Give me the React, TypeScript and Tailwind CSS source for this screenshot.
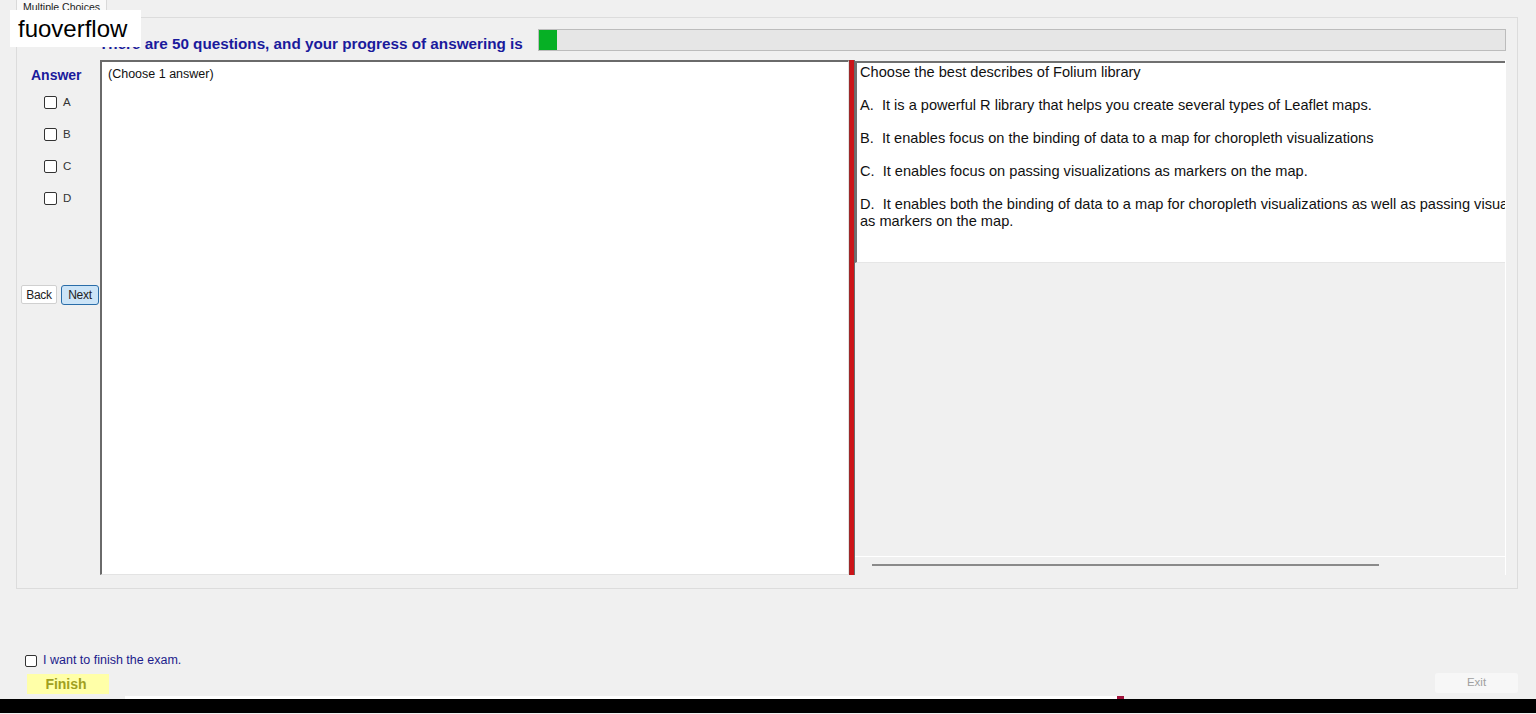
function Box({ size = 13 }: { size?: number }) {
  return (
    <span
      className="inline-block shrink-0 rounded-[2px] border border-[#333] bg-white"
      style={{ width: size, height: size }}
    />
  );
}

const options = [
  "A.  It is a powerful R library that helps you create several types of Leaflet maps.",
  "B.  It enables focus on the binding of data to a map for choropleth visualizations",
  "C.  It enables focus on passing visualizations as markers on the map.",
];

export default function App() {
  return (
    <div className="relative flex h-[714px] w-[1536px] flex-col overflow-hidden bg-[#f0f0f0] text-black [font-family:'Liberation_Sans',Arial,sans-serif]">
      {/* tab header */}
      <div className="flex h-[17px] pl-[16px]">
        <div className="flex h-[17px] w-[91px] items-center justify-center border-x border-[#d9d9d9] bg-[#f9f9f9] pb-[3px] text-[10.5px] leading-none text-[#222]">
          Multiple Choices
        </div>
      </div>

      {/* tab page */}
      <div className="ml-[16px] mr-[18px] flex h-[572px] flex-col border border-[#dcdcdc] pt-[11px]">
        {/* progress header */}
        <div className="flex h-[22px] items-center pr-[11px]">
          <div className="w-[521px] whitespace-nowrap pl-[82px] pt-[7px] text-[15.25px] font-bold leading-none text-[#1a1a9c]">
            There are 50 questions, and your progress of answering is
          </div>
          <div className="flex h-[22px] flex-1 border border-[#bcbcbc] bg-[#e6e6e6]">
            <div className="h-full w-[18px] bg-[#06b025]" />
          </div>
        </div>

        {/* main content */}
        <div className="mt-[9px] flex h-[515px]">
          {/* answer column */}
          <div className="flex w-[83px] shrink-0 flex-col">
            <div className="pl-[14px] pt-[7px] text-[14px] font-bold leading-[16px] text-[#1a1a9c]">Answer</div>
            <div className="mt-[13px] flex flex-col gap-[19px] pl-[27px]">
              {["A", "B", "C", "D"].map((l) => (
                <div key={l} className="flex h-[13px] items-center gap-[6px]">
                  <Box />
                  <span className="text-[11.5px] leading-none text-[#333]">{l}</span>
                </div>
              ))}
            </div>
            <div className="mt-[80px] flex gap-[4px] pl-[4px]">
              <div className="flex h-[19px] w-[36px] items-center justify-center rounded-[2px] border border-[#d0d0d0] bg-white text-[12px] tracking-[-0.3px] text-[#222]">
                Back
              </div>
              <div className="flex h-[20px] w-[38px] items-center justify-center rounded-[3px] border border-[#2a6da8] bg-[#cce4f7] text-[12px] tracking-[-0.3px] text-[#222]">
                Next
              </div>
            </div>
          </div>

          {/* answer text box */}
          <div className="w-[749px] shrink-0 border-b border-l-2 border-r border-t-2 border-b-[#e3e3e3] border-l-[#6a6a6a] border-r-[#e3e3e3] border-t-[#6a6a6a] bg-white pl-[6px] pt-[5px] text-[12.5px] leading-[15px] text-[#111]">
            (Choose 1 answer)
          </div>

          {/* splitter */}
          <div className="w-[6px] shrink-0 border-l border-r border-l-[#9a2a2a] border-r-[#6a6a6a] bg-[#cc1418]" />

          {/* question panel */}
          <div className="mr-[11px] flex min-w-0 flex-1 flex-col border-r border-white">
            <div className="mt-[1px] h-[202px] overflow-hidden border-b border-l-2 border-t-2 border-b-[#e6e6e6] border-l-[#707070] border-t-[#707070] bg-white pl-[3px] pt-[1px] text-[14.6px] leading-[17px] text-[#111]">
              <div className="mb-[16px] whitespace-pre">Choose the best describes of Folium library</div>
              {options.map((o) => (
                <div key={o} className="mb-[16px] whitespace-pre">
                  {o}
                </div>
              ))}
              <div className="whitespace-pre">
                D.  It enables both the binding of data to a map for choropleth visualizations as well as passing visualizations
              </div>
              <div className="whitespace-pre">as markers on the map.</div>
            </div>
            <div className="flex-1" />
            <div className="h-px bg-white" />
            <div className="flex h-[18px] items-start pl-[17px] pt-[7px]">
              <div className="h-[2px] w-[507px] bg-[#8a8a8a]" />
            </div>
          </div>
        </div>
      </div>

      {/* finish section */}
      <div className="mt-[65px] flex h-[13px] items-center gap-[6px] pl-[25px]">
        <Box size={12} />
        <span className="text-[12.5px] leading-none text-[#1c1c8c]">I want to finish the exam.</span>
      </div>
      <div className="mt-[7px] flex h-[20px] items-start justify-between pl-[27px] pr-[18px]">
        <div className="flex h-[20px] w-[82px] items-center justify-center bg-[#ffffa8] pr-[4px] text-[14px] font-bold text-[#a0a020]">
          Finish
        </div>
        <div className="-mt-[1px] flex h-[20px] w-[83px] items-center justify-center rounded-[3px] bg-[#f7f7f7] text-[11.5px] text-[#a0a0a0]">
          Exit
        </div>
      </div>

      {/* bottom strip */}
      <div className="mt-[2px] flex h-[3px]">
        <div className="w-[125px]" />
        <div className="w-[992px] bg-white" />
        <div className="w-[7px] bg-[#a0143c]" />
      </div>
      <div className="h-[14px] bg-black" />

      {/* watermark label */}
      <div className="absolute left-[10px] top-[10px] flex h-[37px] w-[131px] items-center bg-white pl-[8px] text-[24px] leading-none text-black">
        fuoverflow
      </div>
    </div>
  );
}
